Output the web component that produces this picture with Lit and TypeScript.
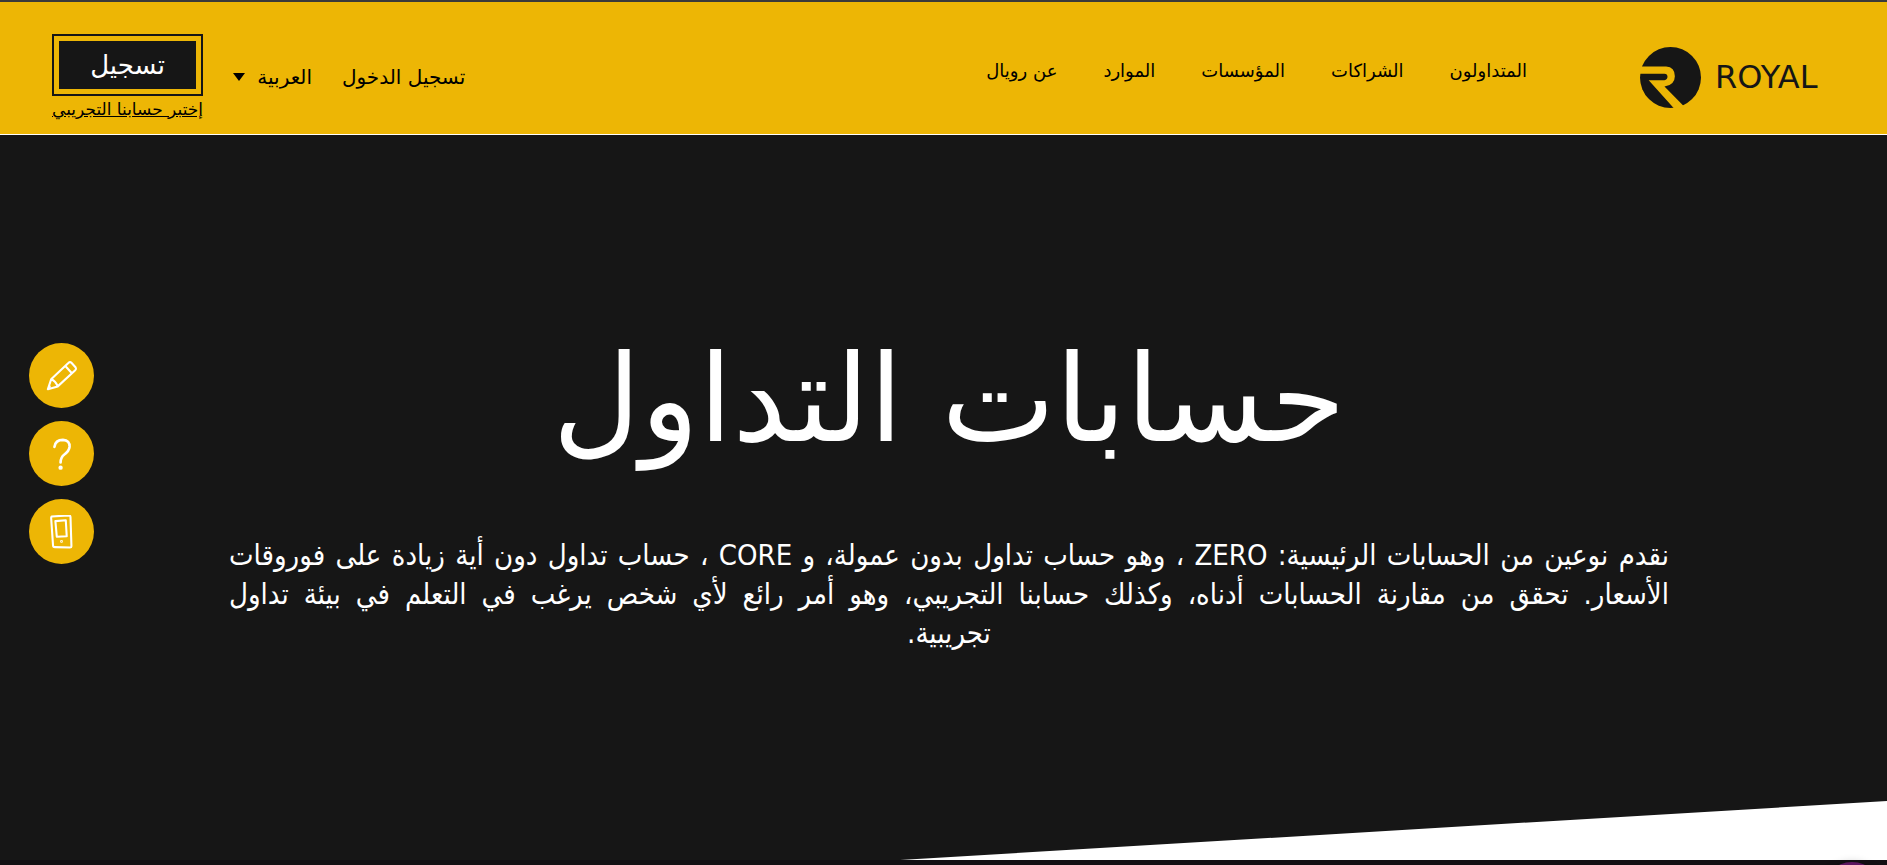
import { LitElement, html, css, svg } from "lit";
import { customElement } from "lit/decorators.js";

const NAV = ["المتداولون", "الشراكات", "المؤسسات", "الموارد", "عن رويال"];

const pencil = svg`
  <path d="M4 32 L7.500 21.500 L26 4 Q27.500 2.500 29 4 L33.500 9 Q34.500 10.500 33 12 L14.500 29 Z M7.500 21.500 Q12 23 14.500 29 M22.500 7.500 L29.500 15 M4 32 L6 29" />`;
const question = svg`
  <path d="M11 10.500 Q12 3 20 3 Q27.500 3.500 27 10.500 Q26.500 15 21.500 18.500 Q17.500 21.500 17.500 27" stroke-width="2.800" />
  <circle cx="17.500" cy="32.500" r="1.200" fill="currentColor" />`;
const phone = svg`
  <path d="M8 1.500 L26.500 0.500 Q28 0.500 28 2.500 L29 33 Q29 34.500 27.500 34.500 L11.500 34 Q9.500 34 9.500 32 L7.500 3 Z" />
  <path d="M12 6.500 L23 5.500 L24 22.500 L13.500 23 Z" />
  <circle cx="18.500" cy="28" r="0.400" fill="currentColor" />`;

const TOOLS = [
  { label: "فتح حساب", icon: pencil },
  { label: "مساعدة", icon: question },
  { label: "اتصل بنا", icon: phone },
];

@customElement("app-header")
class AppHeader extends LitElement {
  static styles = css`
    :host {
      display: block;
      background: #edb605;
      border-top: 2px solid #3a3a3a;
      border-bottom: 1px solid #fff;
      color: #000;
    }
    .bar {
      display: flex;
      align-items: center;
      min-height: 132px;
      box-sizing: border-box;
      padding: 18px 37px 0 52px;
    }
    .logo {
      display: flex;
      align-items: center;
      gap: 14px;
      width: 210px;
      margin-left: 113px;
      direction: ltr;
      color: #161616;
      text-decoration: none;
      font: 32px/40px "DejaVu Sans", sans-serif;
    }
    .mark {
      width: 61px;
      height: 61px;
      flex: none;
    }
    .nav {
      display: flex;
      gap: 46px;
      padding-bottom: 12px;
    }
    .link {
      color: inherit;
      text-decoration: none;
      white-space: nowrap;
      font-size: 18px;
      line-height: 24px;
    }
    .account {
      display: flex;
      align-items: center;
      gap: 30px;
      margin-inline-start: auto;
    }
    .lang {
      display: flex;
      align-items: center;
      gap: 12px;
    }
    .select {
      appearance: none;
      border: 0;
      padding: 0;
      background: none;
      color: inherit;
      font: inherit;
    }
    .select,
    .login {
      font-size: 20px;
      line-height: 24px;
    }
    .caret {
      width: 12px;
      height: 8px;
    }
    .signup {
      display: flex;
      flex-direction: column;
      align-items: center;
      gap: 2px;
    }
    .frame {
      border: 2px solid #161616;
      padding: 5px;
    }
    .button {
      display: block;
      width: 137px;
      height: 48px;
      border: 0;
      padding: 0;
      background: #161616;
      color: #fff;
      font: inherit;
      font-size: 26px;
    }
    .demo {
      color: inherit;
      font-size: 17px;
      line-height: 22px;
      white-space: nowrap;
    }
  `;
  render() {
    return html`
      <header class="bar">
        <a class="logo" href="#">
          <svg class="mark" viewBox="120 141 182 182" aria-hidden="true">
            <circle cx="211" cy="232" r="91" fill="#161616" />
            <path
              fill="#edb605"
              d="M115 199 H198 Q224 201 224 228 Q224 254 193 259 L254 321 L224 327 L146 240 H193 Q202 238 202 230 Q202 221 193 221 H115 Z"
            />
          </svg>
          <span>ROYAL</span>
        </a>
        <nav class="nav">
          ${NAV.map((t) => html`<a class="link" href="#">${t}</a>`)}
        </nav>
        <div class="account">
          <a class="link login" href="#">تسجيل الدخول</a>
          <div class="lang">
            <select class="select" aria-label="اللغة">
              <option>العربية</option>
            </select>
            <svg class="caret" viewBox="0 0 12 8" aria-hidden="true">
              <path d="M0 0H12L6 8Z" />
            </svg>
          </div>
          <div class="signup">
            <div class="frame"><button class="button">تسجيل</button></div>
            <a class="demo" href="#">إختبر حسابنا التجريبي</a>
          </div>
        </div>
      </header>
    `;
  }
}

@customElement("app-root")
class AppRoot extends LitElement {
  static styles = css`
    :host {
      display: flex;
      flex-direction: column;
      min-height: 100vh;
      direction: rtl;
      background: #161616;
      color: #fff;
      font-family: "DejaVu Sans", sans-serif;
    }
    .hero {
      flex: 1;
      display: flex;
      flex-direction: column;
      padding: 185px 218px 0 229px;
    }
    .title {
      margin: 0;
      font-size: 121px;
      line-height: 160px;
      font-weight: 400;
      text-align: center;
    }
    .text {
      margin: 56px 0 0;
      font-family: "DejaVu Sans Condensed", "DejaVu Sans", sans-serif;
      font-size: 29px;
      line-height: 39px;
      text-align: center;
    }
    .full {
      display: block;
      text-align: justify;
      text-align-last: justify;
    }
    .wedge {
      height: 59px;
      margin-inline-end: 47.7%;
      background: #fff;
      clip-path: polygon(0 100%, 100% 0, 100% 100%);
    }
    .next {
      height: 5px;
      background: #130f13;
    }
    .tools {
      position: fixed;
      left: 29px;
      top: 343px;
      display: flex;
      flex-direction: column;
      gap: 13px;
    }
    .tool {
      display: grid;
      place-items: center;
      width: 65px;
      height: 65px;
      border: 0;
      border-radius: 50%;
      padding: 0;
      background: #edb605;
      color: #fff;
    }
    .icon {
      width: 36px;
      height: 34px;
      fill: none;
      stroke: currentColor;
      stroke-width: 2.2;
      stroke-linejoin: round;
      stroke-linecap: round;
    }
    .chat {
      position: fixed;
      right: 5px;
      bottom: -57px;
      width: 60px;
      height: 60px;
      border: 0;
      border-radius: 50%;
      background: #5c1560;
      box-shadow: 0 0 8px rgba(0, 0, 0, 0.2);
    }
  `;
  render() {
    return html`
      <app-header></app-header>
      <main class="hero">
        <h1 class="title">حسابات التداول</h1>
        <p class="text">
          <span class="full">
            نقدم نوعين من الحسابات الرئيسية: ZERO ، وهو حساب تداول بدون عمولة، و
            CORE ، حساب تداول دون أية زيادة على فوروقات الأسعار. تحقق من مقارنة
            الحسابات أدناه، وكذلك حسابنا التجريبي، وهو أمر رائع لأي شخص يرغب في
            التعلم في بيئة تداول
          </span>
          تجريبية.
        </p>
      </main>
      <div class="wedge"></div>
      <div class="next"></div>
      <aside class="tools">
        ${TOOLS.map(
          (t) => html`<button class="tool" aria-label=${t.label}>
            <svg class="icon" viewBox="0 0 38 36" aria-hidden="true">${t.icon}</svg>
          </button>`,
        )}
      </aside>
      <button class="chat" aria-label="محادثة"></button>
    `;
  }
}
